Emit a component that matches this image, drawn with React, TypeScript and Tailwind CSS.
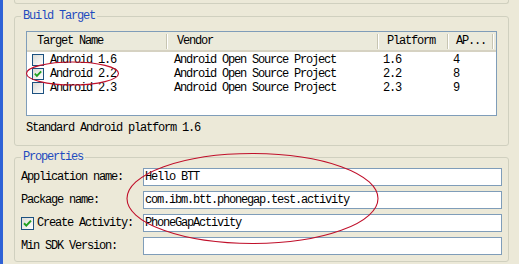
import React from "react";

const font = { fontFamily: '"Liberation Mono", "DejaVu Sans Mono", monospace' };

function Check({ checked, size = 12 }: { checked?: boolean; size?: number }) {
  return (
    <span
      className="relative shrink-0 border border-[#1c5180] bg-gradient-to-br from-[#dcdcd7] to-white flex items-center justify-center"
      style={{ width: size, height: size }}
    >
      {checked && (
        <svg width={size - 2} height={size - 2} viewBox="0 0 11 11">
          <path d="M2 5.2 L4.3 7.6 L9 2.6" fill="none" stroke="#21a121" strokeWidth="2" />
        </svg>
      )}
    </span>
  );
}

function HeaderCell({ w, pl, children }: { w: number; pl: number; children?: React.ReactNode }) {
  return (
    <div className="flex items-center h-full shrink-0" style={{ width: w }}>
      <div className="flex-1 whitespace-nowrap overflow-hidden" style={{ paddingLeft: pl }}>
        {children}
      </div>
      <div className="w-px h-[15px] bg-[#c7c5b2]" />
      <div className="w-px h-[15px] bg-white" />
    </div>
  );
}

const rows = [
  { name: "Android 1.6", plat: "1.6", api: "4", checked: false },
  { name: "Android 2.2", plat: "2.2", api: "8", checked: true },
  { name: "Android 2.3", plat: "2.3", api: "9", checked: false },
];

function Field({ label, value, check }: { label: string; value: string; check?: boolean }) {
  return (
    <div className="flex items-center h-[18px]">
      <div className="w-[122px] flex items-center gap-[3px] whitespace-nowrap">
        {check && <Check checked size={13} />}
        <span>{label}</span>
      </div>
      <div className="flex-1 h-[18px] border border-[#7f9db9] bg-white flex items-center pl-[1px] whitespace-nowrap">
        {value}
      </div>
    </div>
  );
}

export default function App() {
  return (
    <div
      className="relative flex w-[519px] h-[264px] overflow-hidden bg-[#ece9d8] text-[12px] leading-[14px] tracking-[-1.2px] text-black"
      style={font}
    >
      <div className="w-[3px] shrink-0 bg-[#2f62d6]" />
      <div className="flex-1 flex flex-col pl-[11px] pr-[10px]">
        <div className="h-[4px] border-x border-b border-[#d0d0bf] rounded-b-[3px]" />

        <div className="relative mt-[12px] h-[130px] border border-[#d0d0bf] rounded-[3px] pl-[11px] pr-[11px] pt-[14px]">
          <span className="absolute left-[6px] top-[-8px] px-[2px] bg-[#ece9d8] text-[#1f4bbf]">Build Target</span>
          <div className="h-[85px] border border-[#7f9db9] bg-white flex flex-col">
            <div className="h-[20px] flex bg-[#ebeadb] border-b-2 border-[#d6d2c2] shrink-0">
              <HeaderCell w={141} pl={10}>Target Name</HeaderCell>
              <HeaderCell w={211} pl={9}>Vendor</HeaderCell>
              <HeaderCell w={70} pl={8}>Platform</HeaderCell>
              <HeaderCell w={45} pl={7}>AP...</HeaderCell>
            </div>
            <div className="pt-[1px]">
              {rows.map((r) => (
                <div key={r.name} className="flex h-[14px] items-center whitespace-nowrap">
                  <div className="w-[141px] flex items-center gap-[6px] pl-[5px]">
                    <Check checked={r.checked} />
                    <span>{r.name}</span>
                  </div>
                  <div className="w-[211px] pl-[6px]">Android Open Source Project</div>
                  <div className="w-[70px] pl-[4px]">{r.plat}</div>
                  <div className="w-[45px] pl-[4px]">{r.api}</div>
                </div>
              ))}
            </div>
          </div>
          <div className="mt-[5px] whitespace-nowrap">Standard Android platform 1.6</div>
        </div>

        <div className="relative mt-[11px] h-[105px] border border-[#d0d0bf] rounded-[3px] pl-[6px] pr-[6px] pt-[10px] flex flex-col gap-[5px]">
          <span className="absolute left-[6px] top-[-8px] px-[2px] bg-[#ece9d8] text-[#1f4bbf]">Properties</span>
          <Field label="Application name:" value="Hello BTT" />
          <Field label="Package name:" value="com.ibm.btt.phonegap.test.activity" />
          <Field label="Create Activity:" value="PhoneGapActivity" check />
          <Field label="Min SDK Version:" value="" />
        </div>
      </div>

      <svg className="absolute inset-0 pointer-events-none" width="519" height="264" viewBox="0 0 519 264">
        <ellipse cx="72.5" cy="73.5" rx="46" ry="11.5" fill="none" stroke="#c00f2a" strokeWidth="1.1" />
        <ellipse cx="252.5" cy="198.5" rx="125.5" ry="45" fill="none" stroke="#c00f2a" strokeWidth="1.1" />
      </svg>
    </div>
  );
}
